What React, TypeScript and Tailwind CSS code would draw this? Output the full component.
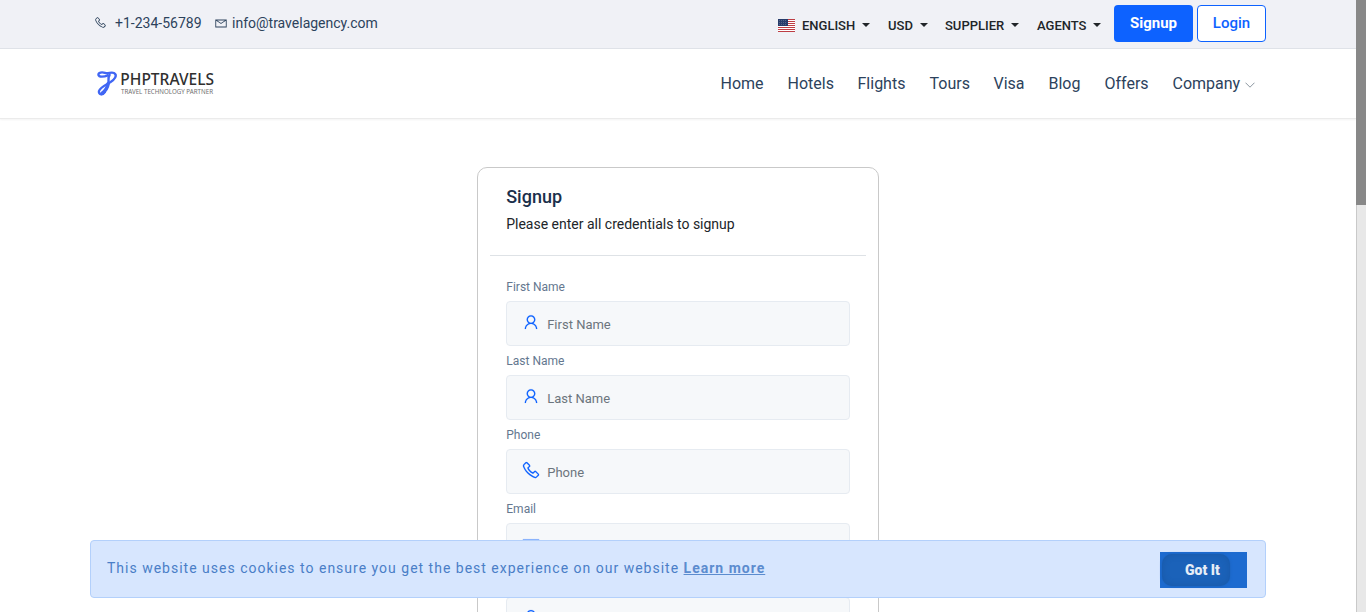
import React from "react";
import { LiaUser, LiaPhoneSolid, LiaEnvelope, LiaLockSolid } from "react-icons/lia";

function Caret() {
  return (
    <svg width="8" height="4" viewBox="0 0 8 4" className="ml-[7px] mb-px shrink-0">
      <path d="M0 0h8L4 4z" fill="#212529" />
    </svg>
  );
}

function Flag() {
  return (
    <svg width="17" height="13" viewBox="0 0 17 13" className="mr-[7px] shrink-0">
      <rect width="17" height="13" fill="#fff" />
      {[0, 2, 4, 6, 8, 10, 12].map((y) => (
        <rect key={y} y={y} width="17" height="1" fill="#bd3d44" />
      ))}
      <rect width="10" height="7" fill="#273c6b" />
      {[1, 3, 5].map((y) => (
        <path key={y} d={`M1 ${y + 0.5}h8`} stroke="#fff" strokeOpacity=".2" strokeWidth="1" strokeDasharray="1 1" />
      ))}
    </svg>
  );
}

function Logo() {
  return (
    <svg width="124" height="30" viewBox="0 0 124 30" className="block">
      <g fill="none" stroke="#4066f4" strokeLinecap="round" strokeLinejoin="round">
        <path d="M12 6.4C8 8 3 8.4 2.4 6C2.2 3.4 6 2.8 9 3.9C12 5 15 2.8 18 4C22 6.2 18.5 10.6 14.3 13.2C9.5 16 3.6 18.6 2.9 22.2C2.6 26 7 26.4 9 23" strokeWidth="2.3" />
        <path d="M13.6 6C11.6 8.5 13 11 12.4 14.5" strokeWidth="2.4" />
        <path d="M12.2 14.5C11.5 18.5 9.4 22 6 24.4" strokeWidth="3.6" />
      </g>
      <text x="24.3" y="15.8" fontFamily="Noto Sans, sans-serif" fontWeight="500" fontSize="15.4" fill="#303030" textLength="93.7" lengthAdjust="spacingAndGlyphs">PHPTRAVELS</text>
      <text x="25" y="24.8" fontFamily="Noto Sans, sans-serif" fontSize="6.8" fill="#707070" textLength="92" lengthAdjust="spacingAndGlyphs">TRAVEL TECHNOLOGY PARTNER</text>
    </svg>
  );
}

const menus = [
  { label: "ENGLISH", width: "w-[110px]", flag: true },
  { label: "USD", width: "w-[57px]" },
  { label: "SUPPLIER", width: "w-[92px]" },
  { label: "AGENTS", width: "w-[77px]" },
];

const links = [
  { label: "Home", width: "w-[67px]" },
  { label: "Hotels", width: "w-[70px]" },
  { label: "Flights", width: "w-[72px]" },
  { label: "Tours", width: "w-[64px]" },
  { label: "Visa", width: "w-[55px]" },
  { label: "Blog", width: "w-[56px]" },
  { label: "Offers", width: "w-[68px]" },
  { label: "Company", width: "w-[72.5px]" },
];

const fields = [
  { label: "First Name", placeholder: "First Name", Icon: LiaUser },
  { label: "Last Name", placeholder: "Last Name", Icon: LiaUser },
  { label: "Phone", placeholder: "Phone", Icon: LiaPhoneSolid },
  { label: "Email", placeholder: "", Icon: LiaEnvelope },
  { label: "", placeholder: "", Icon: LiaLockSolid },
];

export default function App() {
  return (
    <div className="relative flex h-[612px] w-[1366px] overflow-hidden bg-white font-['Roboto',sans-serif]">
      <div className="h-full w-[1356px] overflow-hidden">
        <div className="flex h-[49px] border-b border-[#dfe2e8] bg-[#f0f1f6] pl-[94px] text-[#2c425c]">
          <div className="flex h-[46px] items-center text-[14px]">
            <LiaPhoneSolid className="mb-px size-[13px]" />
            <span className="ml-[8px] w-[99px]">+1-234-56789</span>
            <LiaEnvelope className="mb-px size-[14px]" />
            <span className="ml-[4px]">info@travelagency.com</span>
          </div>
          <div className="ml-auto flex pr-[90px]">
            <div className="flex h-[51px] items-center text-[13px] font-medium text-[#212529]">
              {menus.map((m) => (
                <div key={m.label} className={`flex shrink-0 items-center whitespace-nowrap ${m.width}`}>
                  {m.flag && <Flag />}
                  {m.label}
                  <Caret />
                </div>
              ))}
            </div>
            <button className="mt-[5px] h-[37px] w-[79px] rounded-[4px] bg-[#0d62ff] text-[15px] font-bold text-white">Signup</button>
            <button className="mt-[5px] ml-[4px] h-[37px] w-[69px] rounded-[4px] border border-[#0d62ff] bg-white text-[15px] font-medium text-[#0d62ff]">Login</button>
          </div>
        </div>

        <header className="flex h-[70px] items-center border-b border-[#ebebeb] pl-[96px] shadow-[0_1px_2px_rgba(0,0,0,0.05)]">
          <Logo />
          <nav className="ml-auto flex items-center pr-[101px] text-[16px] text-[#2c425c]">
            {links.map((l) => (
              <a key={l.label} className={`whitespace-nowrap ${l.width}`}>{l.label}</a>
            ))}
            <svg width="10" height="6" viewBox="0 0 10 6" className="mt-[3px]">
              <path d="M.5.7 5 5.2 9.5.7" fill="none" stroke="#8b969f" />
            </svg>
          </nav>
        </header>

        <main className="mx-auto mt-[48px] h-[700px] w-[402px] rounded-[10px] border border-[#c9c9c9] bg-white px-[12px]">
          <div className="h-[88px] border-b border-[#dee2e6] pt-[17px] pr-[16px] pl-[16.2px]">
            <h1 className="text-[18px] leading-[24px] font-medium text-[#1b2f4b]">Signup</h1>
            <p className="mt-[5px] text-[14px] leading-[20px] text-[#212529]">Please enter all credentials to signup</p>
          </div>
          <form className="px-[16px] pt-[22px]">
            {fields.map(({ label, placeholder, Icon }, i) => (
              <div key={i} className="h-[74px]">
                <label className="block h-[23px] pl-[0.3px] text-[12px] leading-[18px] text-[#64778f]">{label}</label>
                <div className="flex h-[45px] rounded-[4px] border border-[#e6ebf1] bg-[#f6f8fa] pl-[14px]">
                  <Icon className={`mt-[10px] ml-[0.4px] size-[20px] stroke-[#0d62ff] stroke-[0.2px] text-[#0d62ff] ${label === "Email" ? "opacity-45" : ""}`} />
                  <span className="ml-[5.8px] pt-[1px] text-[13px] leading-[44px] text-[#6c757d]">{placeholder}</span>
                </div>
              </div>
            ))}
          </form>
        </main>
      </div>

      <div className="h-full w-[10px] border-l border-[#c9c9c9] bg-[#e8e8e8]">
        <div className="-ml-px h-[205px] w-[10px] bg-[#888888]" />
      </div>

      <div className="absolute top-[540px] left-[90px] flex h-[58px] w-[1176px] items-center rounded-[4px] border border-[#b3d0fb] bg-[#d7e6fe] pr-[18px] pl-[16px]">
        <p className="pb-[1px] text-[14px] tracking-[1px] text-[#4a7ec7]">
          This website uses cookies to ensure you get the best experience on our website <a className="font-bold text-[#5c8ccf] underline">Learn more</a>
        </p>
        <button className="mt-[2px] ml-auto flex h-[36px] w-[87px] items-center bg-[#1d6bd0] p-[2px] text-[14px] font-black text-[#e5edf7]">
          <span className="flex h-[32px] w-[68px] items-center rounded-[10px] bg-[#1b62b9] pl-[23px] whitespace-nowrap shadow-[inset_0_0_7px_rgba(20,65,125,0.3),0_0_3px_#1b62b9]">Got It</span>
        </button>
      </div>
    </div>
  );
}
